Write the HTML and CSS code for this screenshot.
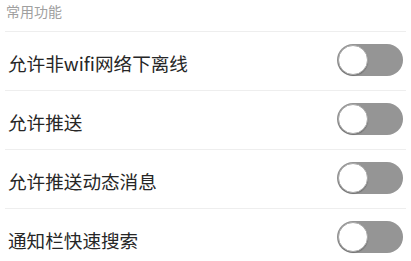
FILE: index.html
```html
<!DOCTYPE html>
<html lang="zh-CN">
<head>
<meta charset="utf-8">
<link rel="stylesheet" href="styles.css">
</head>
<body>
<div class="section">
  <div class="section-title">常用功能</div>
  <div class="list">
    <div class="row"><span class="label">允许非wifi网络下离线</span><span class="toggle"><span class="thumb"></span></span></div>
    <div class="row"><span class="label">允许推送</span><span class="toggle"><span class="thumb"></span></span></div>
    <div class="row"><span class="label">允许推送动态消息</span><span class="toggle"><span class="thumb"></span></span></div>
    <div class="row"><span class="label">通知栏快速搜索</span><span class="toggle"><span class="thumb"></span></span></div>
  </div>
</div>
</body>
</html>
```
FILE: styles.css
```css
html, body {
  margin: 0;
  padding: 0;
  background: #ffffff;
}
body {
  font-family: "Noto Sans CJK SC", "Noto Sans", sans-serif;
  overflow: hidden;
}
.section {
  padding: 0 5px;
}
.section-title {
  height: 31px;
  line-height: 22px;
  font-size: 14px;
  color: #a0a0a0;
  padding-left: 1px;
}
.row {
  display: flex;
  align-items: center;
  justify-content: space-between;
  height: 58px;
  border-top: 1px solid #eeeeee;
  padding: 0 3px 0 3px;
}
.label {
  font-size: 18.6px;
  color: #262626;
  padding-top: 2px;
}
.toggle {
  width: 66px;
  height: 32px;
  border-radius: 16px;
  background: #959595;
  display: flex;
  align-items: center;
  margin-bottom: 2px;
}
.thumb {
  width: 30px;
  height: 30px;
  border-radius: 50%;
  background: #ffffff;
  box-sizing: border-box;
  border: 1px solid #a8a8a8;
  box-shadow: 0 1px 1px rgba(0, 0, 0, 0.25);
  margin-left: 1px;
}
```
